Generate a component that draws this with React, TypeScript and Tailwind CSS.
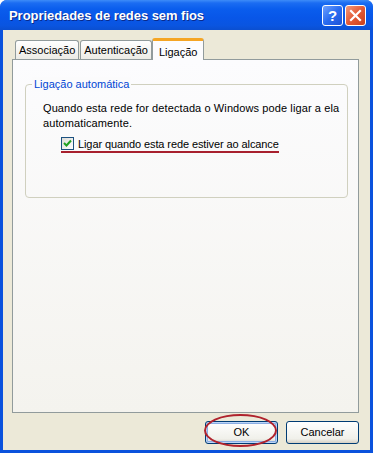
import React from "react";

export default function App() {
  const font = { fontFamily: '"Liberation Sans", Arial, sans-serif' };
  return (
    <div className="w-[374px] h-[455px] bg-white" style={font}>
      <div className="w-[373px] h-[453px] flex flex-col rounded-t-[7px] bg-[#0a52dd] overflow-hidden">
        {/* Title bar */}
        <div className="h-[30px] shrink-0 flex items-center pl-[9px] pr-[7px] bg-[linear-gradient(to_bottom,#3d8cf8_0%,#1b6cf2_10%,#0a5ded_30%,#0856e8_60%,#0a55e0_85%,#0b4fd0_100%)]">
          <div className="text-white font-bold text-[13px] tracking-[-0.05px] pt-[1px] [text-shadow:1px_1px_0_#0a2a8a] flex-1">
            Propriedades de redes sem fios
          </div>
          <div className="flex gap-[2px] items-center mt-[1px]">
            <div className="w-[21px] h-[21px] rounded-[3px] border border-white flex items-center justify-center bg-[linear-gradient(135deg,#6fa1ff_0%,#2a6cf0_50%,#1d52d6_100%)]">
              <span className="text-white font-bold text-[15px] leading-none">?</span>
            </div>
            <div className="w-[21px] h-[21px] rounded-[3px] border border-white flex items-center justify-center bg-[linear-gradient(135deg,#f19a7c_0%,#e35a36_50%,#c9401c_100%)]">
              <svg width="13" height="13" viewBox="0 0 13 13">
                <path d="M2 2 L11 11 M11 2 L2 11" stroke="white" strokeWidth="2.2" strokeLinecap="square" />
              </svg>
            </div>
          </div>
        </div>
        {/* Body */}
        <div className="flex-1 mx-[3px] mb-[3px] bg-[#ece9d8] flex flex-col pl-[9px] pr-[11px]">
          {/* Tabs */}
          <div className="h-[29px] flex items-end pl-[3px] pt-[6px] relative z-10">
            <div className="h-[19px] px-[3px] flex items-center text-[11px] text-black border border-[#919b9c] border-b-0 rounded-t-[3px] bg-[linear-gradient(to_bottom,#ffffff,#ecebe5)]">
              Associação
            </div>
            <div className="h-[19px] ml-[1px] px-[3px] flex items-center text-[11px] text-black border border-[#919b9c] border-b-0 rounded-t-[3px] bg-[linear-gradient(to_bottom,#ffffff,#ecebe5)]">
              Autenticação
            </div>
            <div className="h-[22px] -mb-[1px] px-[6px] flex items-start pt-[3px] text-[11px] text-black border border-[#919b9c] border-b-0 rounded-t-[3px] bg-[#fcfcfe] border-t-[3px] border-t-[#f5a524]">
              Ligação
            </div>
          </div>
          {/* Panel */}
          <div className="h-[354px] border border-[#919b9c] bg-[linear-gradient(to_bottom,#fcfcfe,#f4f3ee)] pt-[24px] pl-[12px] pr-[10px]">
            <div className="relative h-[114px] border border-[#d0d0bf] rounded-[4px]">
              <div className="absolute -top-[8px] left-[6px] px-[2px] bg-[#fbfbfc] text-[11px] text-[#0046d5] leading-[14px]">
                Ligação automática
              </div>
              <div className="pt-[16px] pl-[17px] text-[11px] text-black leading-[15px] tracking-[0.1px]">
                <div>Quando esta rede for detectada o Windows pode ligar a ela</div>
                <div>automaticamente.</div>
              </div>
              <div className="relative inline-flex ml-[35px] mt-[4px] items-center gap-[4px]">
                <div className="w-[13px] h-[13px] border border-[#1c5180] bg-[linear-gradient(135deg,#dcdcd7,#ffffff)] flex items-center justify-center">
                  <svg width="9" height="9" viewBox="0 0 9 9">
                    <path d="M1 4 L3.5 6.5 L8 1.5" stroke="#21a121" strokeWidth="2" fill="none" />
                  </svg>
                </div>
                <div className="text-[11px] text-black leading-[14px] tracking-[-0.1px]">Ligar quando esta rede estiver ao alcance</div>
                <div className="absolute left-0 right-0 top-[14px] h-[2px] bg-[#a8202e]" />
              </div>
            </div>
          </div>
          {/* Buttons */}
          <div className="flex justify-end gap-[8px] mt-[8px]">
            <div className="relative">
              <div className="w-[73px] h-[23px] rounded-[3px] border border-[#003c74] bg-[linear-gradient(to_bottom,#ffffff,#f0f0ea_80%,#d6d0c5)] shadow-[inset_0_0_0_1px_#bcd4f6,inset_0_0_0_2px_#89ade4] flex items-center justify-center text-[11px] text-black">
                OK
              </div>
              <div className="absolute -left-[1px] -top-[7px] w-[73px] h-[33px] rounded-[50%] border-[2px] border-[#b0232d]" />
            </div>
            <div className="w-[73px] h-[23px] rounded-[3px] border border-[#003c74] bg-[linear-gradient(to_bottom,#ffffff,#f0f0ea_80%,#d6d0c5)] flex items-center justify-center text-[11px] text-black">
              Cancelar
            </div>
          </div>
        </div>
      </div>
    </div>
  );
}
